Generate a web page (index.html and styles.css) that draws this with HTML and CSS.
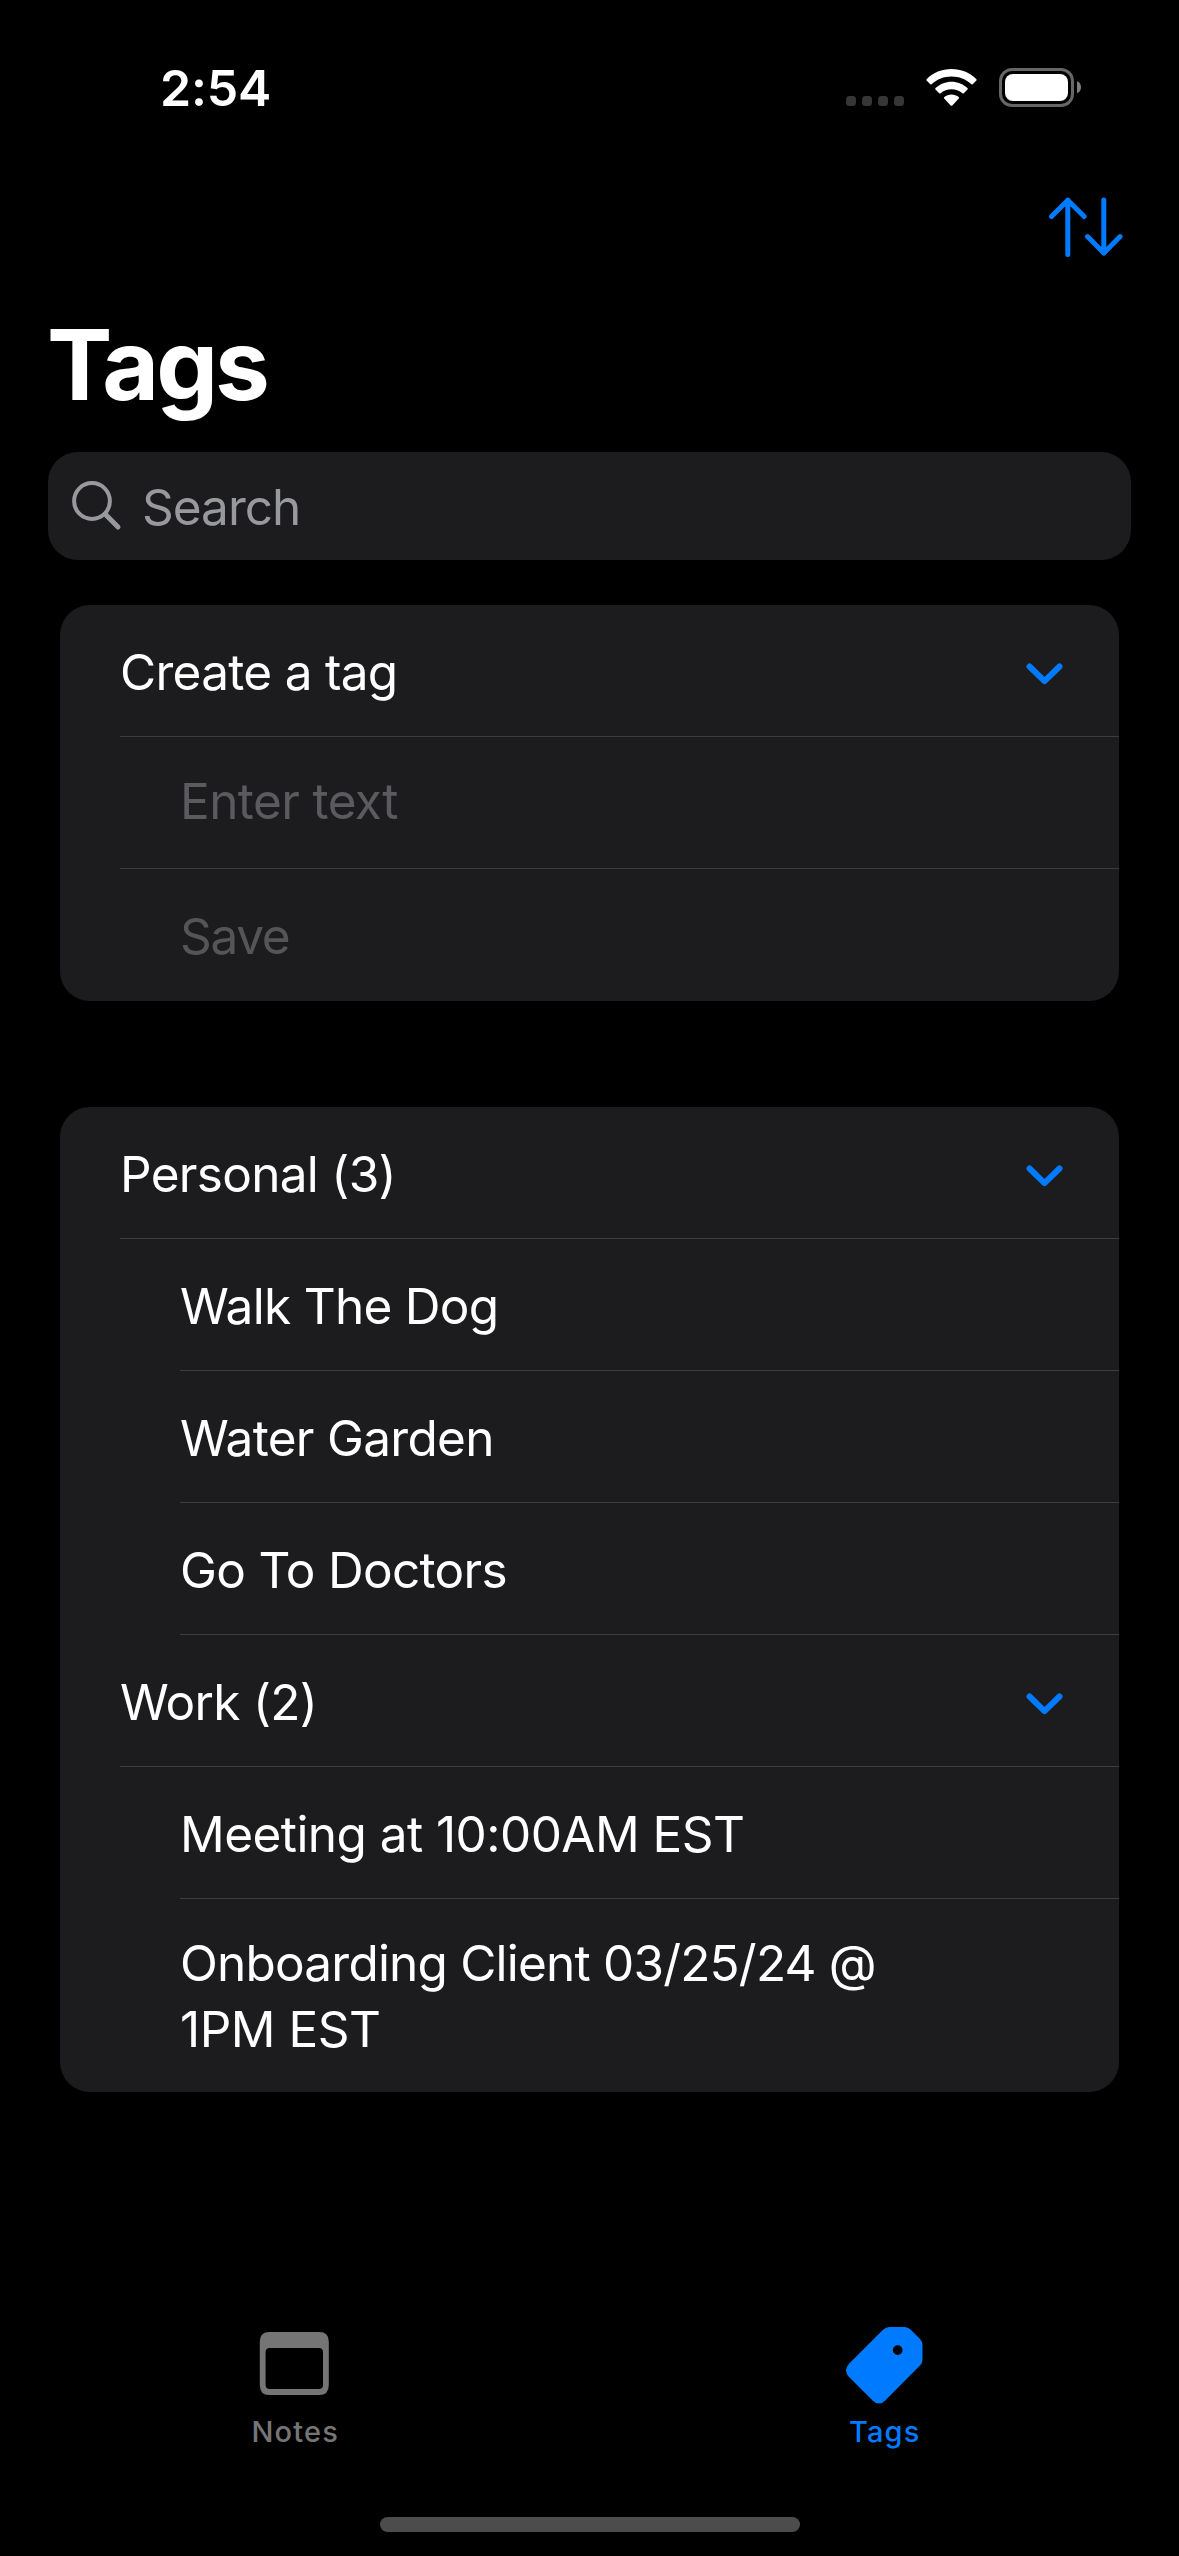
FILE: index.html
```html
<!DOCTYPE html>
<html lang="en">
<head>
<meta charset="utf-8">
<title>Tags</title>
<link rel="stylesheet" href="styles.css">
</head>
<body>
<div class="screen">
  <header class="status">
    <span class="time">2:54</span>
    <div class="indicators">
      <svg class="dots" width="58" height="10" viewBox="0 0 58 10" fill="#363636">
        <rect width="10" height="10" rx="3.5"/><rect x="16" width="10" height="10" rx="3.5"/>
        <rect x="32" width="10" height="10" rx="3.5"/><rect x="48" width="10" height="10" rx="3.5"/>
      </svg>
      <svg class="wifi" width="51" height="38" viewBox="0 0 51 38" fill="#fff">
        <path d="M25.5 0C35 0 43.800 3.600 50.400 10.200Q51 10.900 50.400 11.600L46.700 15.300Q46.100 15.800 45.400 15.200C40 10.200 33 7.500 25.500 7.500S11 10.200 5.600 15.200Q4.900 15.800 4.300 15.300L.6 11.600Q0 10.900 .6 10.200C7.200 3.600 16 0 25.500 0Z"/>
        <path d="M25.500 12.700C31.500 12.700 37.200 15 41.500 19Q42.100 19.700 41.500 20.400L37.800 24.200Q37.100 24.800 36.400 24.200C33.400 21.600 29.600 20.200 25.500 20.200S17.600 21.600 14.600 24.200Q13.900 24.800 13.200 24.200L9.500 20.400Q8.900 19.700 9.500 19C13.800 15 19.500 12.700 25.500 12.700Z"/>
        <path d="M25.500 25.400C28.200 25.400 30.700 26.300 32.700 27.900Q33.500 28.600 32.800 29.400L26.300 36.400Q25.500 37.200 24.700 36.400L18.200 29.400Q17.500 28.600 18.300 27.900C20.300 26.300 22.800 25.400 25.500 25.400Z"/>
      </svg>
      <svg class="battery" width="82" height="39" viewBox="0 0 82 39">
        <rect x="1.500" y="1.500" width="72" height="36" rx="11.500" fill="none" stroke="#666" stroke-width="3"/>
        <rect x="6" y="6" width="63" height="27" rx="8" fill="#fff"/>
        <path d="M78 13Q82 15 82 19.300T78 25.500Z" fill="#7d7d7d"/>
      </svg>
    </div>
  </header>

  <div class="toolbar">
    <svg width="76" height="62" viewBox="0 1 76 62" fill="none" stroke="#007aff" stroke-width="5" stroke-linecap="round" stroke-linejoin="round">
      <path d="M20.800 58.500V4M4.500 20.500 20.800 4.200 37.100 20.500M56.800 4V57M40.500 40.600 56.800 57.100 73.100 40.600"/>
    </svg>
  </div>

  <h1 class="title">Tags</h1>

  <div class="search">
    <svg width="50" height="50" viewBox="0 0 50 50" fill="none" stroke="#98989f" stroke-linecap="round">
      <circle cx="20" cy="20" r="17.900" stroke-width="4"/>
      <path d="M33.300 33.300 46 46" stroke-width="5"/>
    </svg>
    <span class="search-text">Search</span>
  </div>

  <section class="card create">
    <div class="row head"><span>Create a tag</span><svg class="chevron" viewBox="0 0 37 22"><path d="M3.500 3.500 18.500 18.200 33.500 3.500"/></svg></div>
    <div class="row sub input">Enter text</div>
    <div class="row sub save">Save</div>
  </section>

  <section class="card groups">
    <div class="row head"><span>Personal (3)</span><svg class="chevron" viewBox="0 0 37 22"><path d="M3.500 3.500 18.500 18.200 33.500 3.500"/></svg></div>
    <div class="row item">Walk The Dog</div>
    <div class="row item">Water Garden</div>
    <div class="row item">Go To Doctors</div>
    <div class="row head"><span>Work (2)</span><svg class="chevron" viewBox="0 0 37 22"><path d="M3.500 3.500 18.500 18.200 33.500 3.500"/></svg></div>
    <div class="row item meeting">Meeting at 10:00AM EST</div>
    <div class="row item multiline"><span class="first-line">Onboarding Client 03/25/24 @</span><span>1PM EST</span></div>
  </section>

  <nav class="tabs">
    <div class="tab">
      <svg width="78" height="80" viewBox="0.7 0 78 80"><path fill="#757575" fill-rule="evenodd" d="M14 7H64Q73.500 7 73.500 16.500V60Q73.500 70 64 70H14Q4.500 70 4.500 60V16.500Q4.500 7 14 7ZM14.500 23Q10.300 23 10.300 27V60Q10.300 64 14.500 64H63.500Q67.700 64 67.700 60V27Q67.700 23 63.500 23Z"/></svg>
      <span>Notes</span>
    </div>
    <div class="tab active">
      <svg width="78" height="80" viewBox="0 0 78 80"><path fill="#007aff" fill-rule="evenodd" d="M44.500 2H59.500Q63 2 65.800 4.800L75 14Q77.500 16.500 77.500 20V34.500Q77.500 38 75 40.500L40.500 75.200Q34 82 27.300 75.200L4 51.900Q-2 45.500 4 38.700L38 4.700Q41 2 44.500 2ZM52.700 20.200A4.900 4.900 0 1 0 52.700 30A4.900 4.900 0 1 0 52.700 20.200Z"/></svg>
      <span>Tags</span>
    </div>
  </nav>
  <div class="home"></div>
</div>
</body>
</html>
```
FILE: styles.css
```css
* { box-sizing: border-box; }

body {
  margin: 0;
  background: #000;
  color: #fff;
  font-family: "Inter", "Liberation Sans", sans-serif;
  font-size: 49.5px;
  letter-spacing: -0.7px;
}

svg { display: block; flex: none; }

.screen {
  display: flex;
  flex-direction: column;
  width: 1179px;
  height: 2556px;
  overflow: hidden;
}

.status {
  display: flex;
  justify-content: space-between;
  height: 197px;
  padding: 58px 98px 0 160px;
}

.time {
  font-size: 50px;
  font-weight: 600;
  line-height: 60px;
  letter-spacing: -0.2px;
}

.indicators { display: flex; align-items: flex-start; padding-top: 10px; }
.dots { margin-top: 28px; }
.wifi { margin: 1px 22px 0; }

.toolbar {
  display: flex;
  justify-content: flex-end;
  height: 108px;
  padding-right: 56px;
}

.title {
  height: 147px;
  margin: 0;
  padding-left: 47px;
  font-size: 98px;
  font-weight: 700;
  line-height: 120px;
  letter-spacing: -3px;
}

.search {
  display: flex;
  gap: 20px;
  height: 108px;
  margin: 0 48px;
  padding: 29px 24px 0;
  border-radius: 30px;
  background: #1c1c1e;
  color: #98989f;
}

.search-text {
  line-height: 60px;
  margin-top: -4px;
  letter-spacing: -1px;
}

.card {
  margin: 0 60px;
  border-radius: 30px;
  background: #1c1c1e;
  overflow: hidden;
}

.create { margin-top: 45px; }
.groups { margin-top: 106px; }

.row {
  display: flex;
  align-items: center;
  height: 132px;
  padding-top: 3px;
  margin-left: 60px;
  border-bottom: 1px solid #3d3d41;
}

.row:last-child { border-bottom: 0; }

.head { justify-content: space-between; padding: 2px 56px 0 0; }
.item { margin-left: 120px; }

.input { padding: 0 0 4px 60px; color: #5a5a5f; letter-spacing: -0.6px; }
.save { padding: 1px 0 0 60px; color: #555; letter-spacing: -1.3px; }
.meeting { letter-spacing: -0.55px; }

.multiline {
  display: block;
  height: 193px;
  padding-top: 31px;
  line-height: 66px;
  letter-spacing: -0.5px;
}

.multiline span { display: block; }
.multiline .first-line { letter-spacing: -0.8px; }

.chevron {
  width: 37px;
  height: 22px;
  margin-top: 5px;
  fill: none;
  stroke: #007aff;
  stroke-width: 6;
  stroke-linecap: round;
  stroke-linejoin: round;
}

.tabs {
  display: grid;
  grid-template-columns: 1fr 1fr;
  margin-top: 233px;
  height: 192px;
}

.tab {
  display: flex;
  flex-direction: column;
  align-items: center;
  color: #757575;
  font-size: 29px;
  font-weight: 450;
  line-height: 34px;
  letter-spacing: 1.2px;
}

.tab span { margin-top: 10px; padding-left: 1px; }
.tab.active { color: #007aff; }

.home {
  width: 420px;
  height: 15px;
  margin: 0 auto;
  border-radius: 8px;
  background: #4c4c4c;
}
```
